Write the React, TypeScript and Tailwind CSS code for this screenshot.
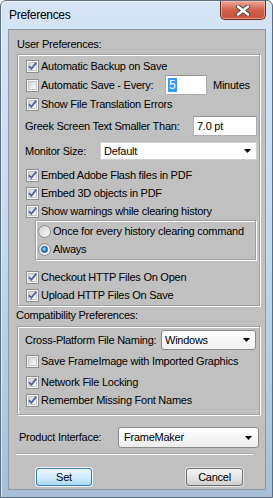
import React from "react";

const txt = "text-[11px] leading-[13px] tracking-[-0.25px] text-black whitespace-nowrap";
const etched = "border border-[#a0a0a0] shadow-[inset_1px_1px_0_#ffffff,1px_1px_0_#ffffff]";

function CheckBox({ on }: { on?: boolean }) {
  return (
    <span className="relative w-[13px] h-[13px] shrink-0 flex border border-[#8e8f8f] bg-[#f5f5f5] p-[1px]">
      <span className="flex-1 border border-[#c5c5c5] bg-gradient-to-br from-[#d4d4d4] to-[#fafafa]" />
      {on && (
        <svg className="absolute inset-0" width="11" height="11" viewBox="0 0 11 11">
          <path d="M2 5.2 L4.3 7.8 L9.3 1.6" fill="none" stroke="#4f67a3" strokeWidth="1.9" />
        </svg>
      )}
    </span>
  );
}

function Radio({ on }: { on?: boolean }) {
  return (
    <span className="w-[13px] h-[13px] shrink-0 rounded-full border border-[#8e8f8f] bg-gradient-to-br from-[#d0d0d0] to-[#fbfbfb] flex items-center justify-center">
      {on && (
        <span className="w-[7px] h-[7px] rounded-full border border-[#1b4f86] bg-[radial-gradient(circle_at_40%_35%,#a9e3ff_0%,#3b9be0_45%,#0d4f93_100%)]" />
      )}
    </span>
  );
}

function CheckRow({ on, label, cls = "" }: { on?: boolean; label: string; cls?: string }) {
  return (
    <div className={`h-[18px] flex items-center pl-[8px] gap-[2px] ${cls}`}>
      <CheckBox on={on} />
      <span className={txt}>{label}</span>
    </div>
  );
}

function Arrow() {
  return (
    <svg width="7" height="4" viewBox="0 0 7 4" className="shrink-0">
      <path d="M0 0 H7 L3.5 4 Z" fill="#000" />
    </svg>
  );
}

function CloseX() {
  return (
    <svg width="16" height="11" viewBox="0 0 16 11">
      <path d="M3 1.5 L13 9.5 M13 1.5 L3 9.5" stroke="#4a4a4a" strokeWidth="4.4" strokeLinecap="round" />
      <path d="M3 1.5 L13 9.5 M13 1.5 L3 9.5" stroke="#ffffff" strokeWidth="2.4" strokeLinecap="round" />
    </svg>
  );
}

export default function App() {
  return (
    <div className="w-[273px] h-[498px] flex flex-col rounded-t-[6px] border border-[#5a6c80] bg-gradient-to-b from-[#d5e5f5] via-[#c4d8ee] to-[#a9bed6] shadow-[inset_1px_1px_0_rgba(255,255,255,0.6)] font-['Liberation_Sans',Arial,sans-serif] overflow-hidden">
      {/* title bar */}
      <div className="h-[28px] flex items-start justify-between shrink-0">
        <span className="pl-[8px] pt-[7px] text-[12px] leading-[14px] tracking-[-0.3px] text-black">Preferences</span>
        <div className="mr-[6px] w-[46px] h-[19px] rounded-b-[5px] border border-t-0 border-[#6a2b20] bg-gradient-to-b from-[#e9ab9a] via-[#d0604a] to-[#c8543c] shadow-[inset_0_0_0_1px_rgba(255,190,170,0.6)] flex items-center justify-center">
          <CloseX />
        </div>
      </div>

      {/* client area */}
      <div className="flex-1 ml-[7px] mr-[6px] mb-[7px] border border-[#8d99a6] bg-[#c0c0c0] flex flex-col">
        <div className={`mt-[8px] ml-[8px] h-[13px] ${txt}`}>User Preferences:</div>

        <div className={`mt-[3px] ml-[8px] w-[243px] ${etched} flex flex-col`}>
          <CheckRow on label="Automatic Backup on Save" cls="mt-[2px]" />
          <div className="h-[20px] flex items-center pl-[8px] gap-[2px]">
            <CheckBox />
            <span className={`w-[122px] ${txt}`}>Automatic Save - Every:</span>
            <div className="w-[42px] h-[20px] border border-[#abadb3] border-t-[#8f9298] bg-white flex items-center pl-[2px]">
              <span className="bg-[#3399ff] text-white text-[12px] leading-[14px] px-[1px]">5</span>
            </div>
            <span className={`ml-[4px] ${txt}`}>Minutes</span>
          </div>
          <CheckRow on label="Show File Translation Errors" />
          <div className="mt-[3px] h-[20px] flex items-center pl-[7px]">
            <span className={`w-[168px] ${txt}`}>Greek Screen Text Smaller Than:</span>
            <div className="w-[64px] h-[20px] border border-[#abadb3] border-t-[#8f9298] bg-white flex items-center pl-[3px]">
              <span className={txt}>7.0 pt</span>
            </div>
          </div>
          <div className="mt-[6px] h-[18px] flex items-center pl-[7px]">
            <span className={`w-[75px] ${txt}`}>Monitor Size:</span>
            <div className="w-[157px] h-[18px] border border-[#d0d0d0] bg-white flex items-center justify-between pl-[3px] pr-[5px]">
              <span className={txt}>Default</span>
              <Arrow />
            </div>
          </div>
          <CheckRow on label="Embed Adobe Flash files in PDF" cls="mt-[6px]" />
          <CheckRow on label="Embed 3D objects in PDF" />
          <CheckRow on label="Show warnings while clearing history" />
          <div className={`ml-[17px] w-[221px] ${etched} flex flex-col pt-[1px] pb-[1px]`}>
            <div className="h-[18px] flex items-center pl-[2px] gap-[2px]">
              <Radio />
              <span className={txt}>Once for every history clearing command</span>
            </div>
            <div className="h-[18px] flex items-center pl-[2px] gap-[2px]">
              <Radio on />
              <span className={txt}>Always</span>
            </div>
          </div>
          <CheckRow on label="Checkout HTTP Files On Open" cls="mt-[8px]" />
          <CheckRow on label="Upload HTTP Files On Save" cls="mb-[1px]" />
        </div>

        <div className={`mt-[3px] ml-[7px] h-[13px] ${txt}`}>Compatibility Preferences:</div>

        <div className={`mt-[4px] ml-[8px] w-[243px] ${etched} flex flex-col`}>
          <div className="mt-[3px] h-[20px] flex items-center pl-[7px]">
            <span className={`w-[136px] ${txt}`}>Cross-Platform File Naming:</span>
            <div className="w-[95px] h-[20px] rounded-[3px] border border-[#8a8a8a] bg-gradient-to-b from-white to-[#f0f0f0] flex items-center justify-between pl-[3px] pr-[5px]">
              <span className={txt}>Windows</span>
              <Arrow />
            </div>
          </div>
          <CheckRow label="Save FrameImage with Imported Graphics" cls="mt-[2px]" />
          <CheckRow on label="Network File Locking" cls="mt-[3px]" />
          <CheckRow on label="Remember Missing Font Names" cls="mb-[5px]" />
        </div>

        <div className="mt-[12px] ml-[10px] h-[21px] flex items-center">
          <span className={`w-[99px] ${txt}`}>Product Interface:</span>
          <div className="w-[141px] h-[21px] rounded-[3px] border border-[#8a8a8a] bg-gradient-to-b from-white to-[#ededed] flex items-center justify-between pl-[5px] pr-[6px]">
            <span className={txt}>FrameMaker</span>
            <Arrow />
          </div>
        </div>

        <div className="mt-[5px] ml-[7px] w-[237px] h-[2px] border-t border-[#a8a8a8] bg-white" />

        <div className="mt-[13px] flex items-center">
          <button className={`ml-[27px] w-[56px] h-[18px] rounded-[3px] border border-[#3c7fb1] bg-gradient-to-b from-[#eaf6fd] via-[#d3edfb] to-[#a9daf5] shadow-[0_0_0_1px_#eef3f7] flex items-center justify-center ${txt}`}>
            Set
          </button>
          <button className={`ml-[94px] w-[57px] h-[18px] rounded-[3px] border border-[#707070] bg-gradient-to-b from-[#f4f4f4] via-[#e6e6e6] to-[#cfcfcf] shadow-[0_0_0_1px_#e4e4e4] flex items-center justify-center ${txt}`}>
            Cancel
          </button>
        </div>
      </div>
    </div>
  );
}
